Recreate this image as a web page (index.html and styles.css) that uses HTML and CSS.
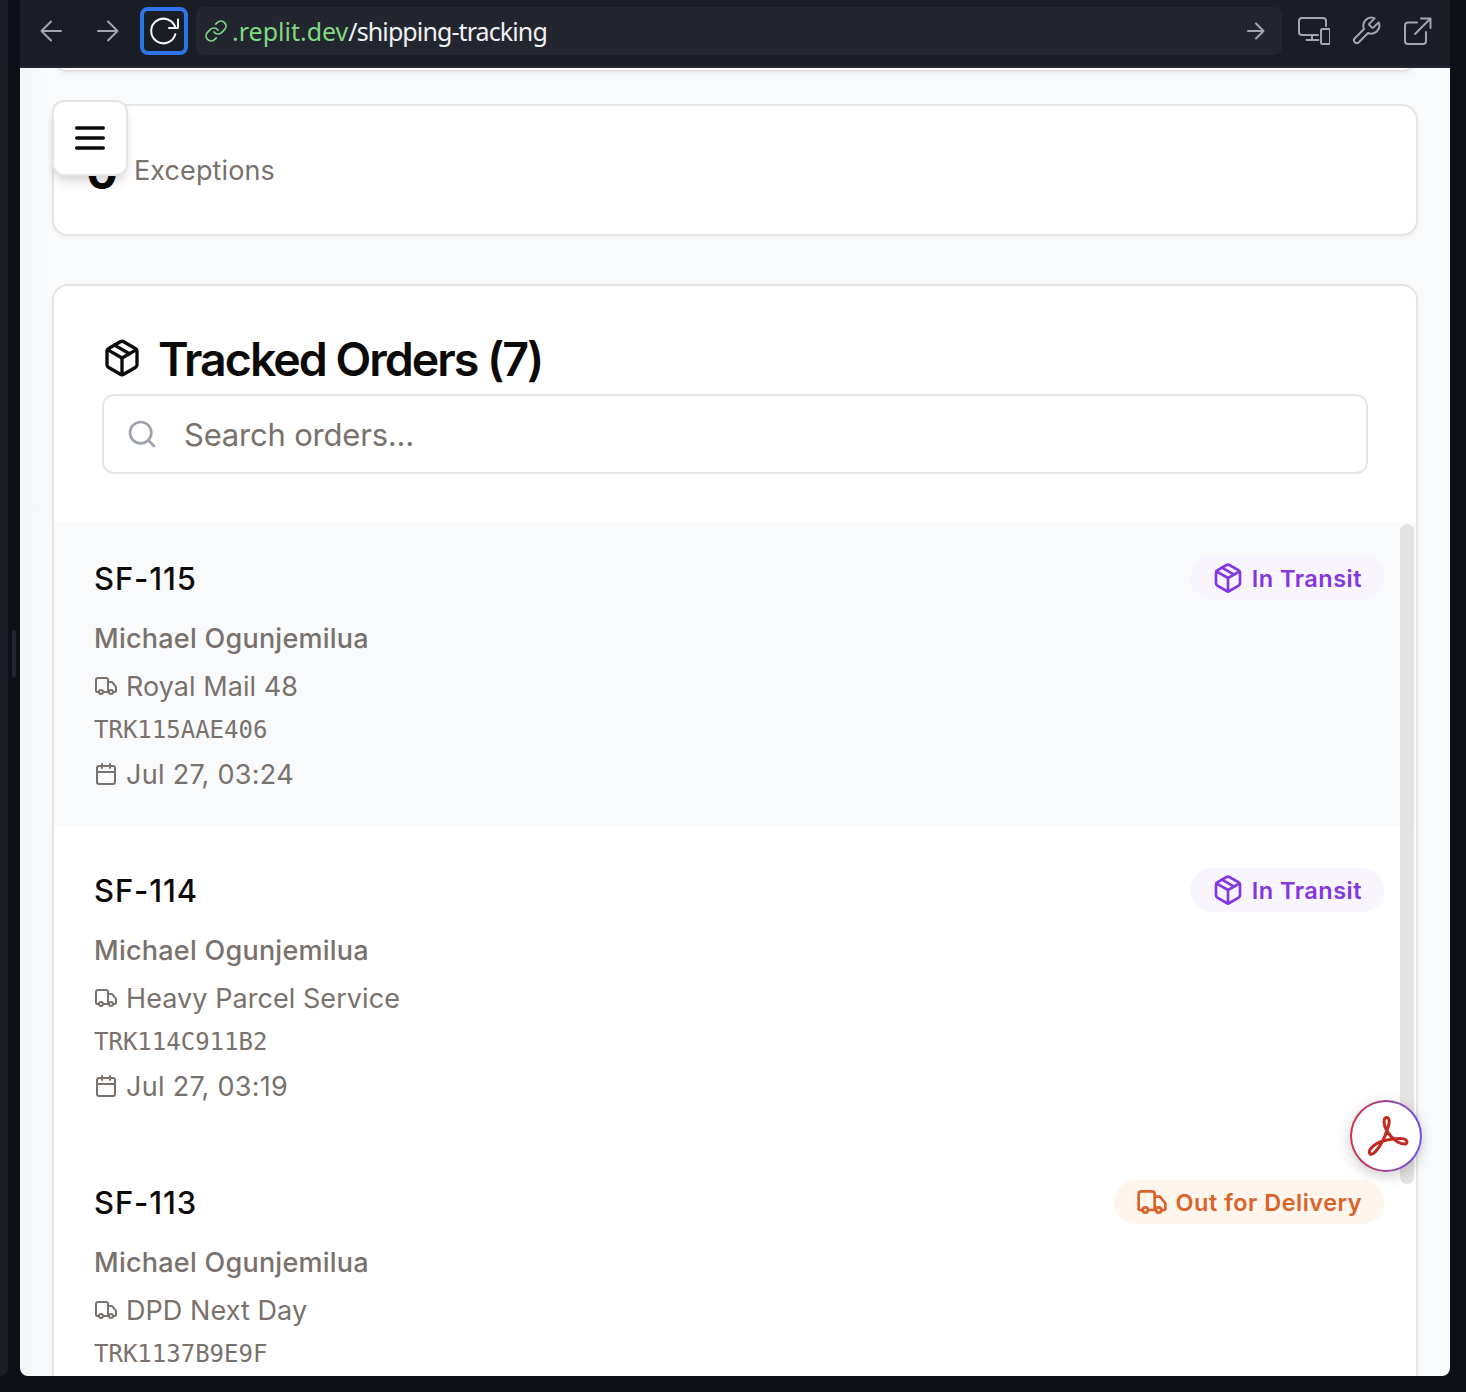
FILE: index.html
```html
<!DOCTYPE html>
<html lang="en">
<head>
<meta charset="utf-8">
<title>Shipping tracking</title>
<link rel="stylesheet" href="styles.css">
</head>
<body>
<svg class="defs" aria-hidden="true">
  <symbol id="package" viewBox="0 0 24 24"><path d="M11 21.73a2 2 0 0 0 2 0l7-4A2 2 0 0 0 21 16V8a2 2 0 0 0-1-1.73l-7-4a2 2 0 0 0-2 0l-7 4A2 2 0 0 0 3 8v8a2 2 0 0 0 1 1.73z"/><path d="M12 22V12"/><path d="m3.3 7 8.7 5 8.7-5"/><path d="m7.5 4.27 9 5.15"/></symbol>
  <symbol id="truck" viewBox="0 0 24 24"><path d="M14 18V6a2 2 0 0 0-2-2H4a2 2 0 0 0-2 2v11a1 1 0 0 0 1 1h2"/><path d="M15 18H9"/><path d="M19 18h2a1 1 0 0 0 1-1v-3.65a1 1 0 0 0-.22-.624l-3.48-4.35A1 1 0 0 0 17.520 8H14"/><circle cx="17" cy="18" r="2"/><circle cx="7" cy="18" r="2"/></symbol>
  <symbol id="calendar" viewBox="0 0 24 24"><path d="M8 2v4M16 2v4M3 10h18"/><rect x="3" y="4" width="18" height="18" rx="2"/></symbol>
</svg>
<div class="workspace">
  <aside class="side"></aside>
  <div class="divider"><span class="grip"></span></div>
  <div class="preview">
    <header class="toolbar">
      <svg class="nav back" viewBox="0 0 22 22"><path d="M21 11H1.500M11 1.500 1.500 11l9.500 9.500"/></svg>
      <svg class="nav forward" viewBox="0 0 22 22"><path d="M1 11h19.500M11 1.500l9.500 9.500-9.500 9.500"/></svg>
      <button class="reload"><svg viewBox="0 0 30 30"><path d="M29 3.500V12h-9M26.400 11.900A12.300 12.300 0 1 0 26.400 18.100"/></svg></button>
      <div class="address">
        <svg class="link" viewBox="0 0 24 24"><path d="M10 13a5 5 0 0 0 7.540.54l3-3a5 5 0 0 0-7.070-7.070l-1.720 1.710"/><path d="M14 11a5 5 0 0 0-7.540-.54l-3 3a5 5 0 0 0 7.070 7.070l1.710-1.710"/></svg>
        <span class="url"><span class="host">.replit.dev</span>/shipping-tracking</span>
        <svg class="go" viewBox="0 0 18 18"><path d="M1 9h15.500M9 1.500 16.500 9 9 16.500"/></svg>
      </div>
      <svg class="tool devices" viewBox="0 0 32 28"><path d="M28 9V4a3 3 0 0 0-3-3H4a3 3 0 0 0-3 3v11a3 3 0 0 0 3 3h16M14 18v5M8.500 23h12"/><rect x="23" y="12" width="9" height="15" rx="1.500"/></svg>
      <svg class="tool wrench" viewBox="0 0 24 24"><path d="M14.700 6.300a1 1 0 0 0 0 1.400l1.600 1.600a1 1 0 0 0 1.400 0l3.770-3.770a6 6 0 0 1-7.940 7.940l-6.910 6.910a2.120 2.120 0 0 1-3-3l6.910-6.910a6 6 0 0 1 7.940-7.940l-3.760 3.760z"/></svg>
      <svg class="tool external" viewBox="0 0 28 28"><path d="M13 5.500H4a3 3 0 0 0-3 3V24a3 3 0 0 0 3 3h15a3 3 0 0 0 3-3V15M17 1.500h9.500V11M26.500 1.500 11 17"/></svg>
    </header>
    <main class="page">
      <section class="card previous"></section>
      <section class="card stat"><b>0</b><span>Exceptions</span></section>
      <section class="card orders">
        <div class="orders-head">
          <h1><svg class="icon"><use href="#package"/></svg><span>Tracked Orders (7)</span></h1>
          <label class="search"><svg class="icon" viewBox="0 0 24 24"><circle cx="11" cy="11" r="8"/><path d="m21 21-4.300-4.300"/></svg><span>Search orders...</span></label>
        </div>
        <div class="list">
          <article class="order active">
            <div class="top"><h2>SF-115</h2><span class="badge transit"><svg class="icon"><use href="#package"/></svg>In Transit</span></div>
            <p class="name">Michael Ogunjemilua</p>
            <p class="line"><svg class="icon"><use href="#truck"/></svg><span>Royal Mail 48</span></p>
            <p class="track">TRK115AAE406</p>
            <p class="line date"><svg class="icon"><use href="#calendar"/></svg><span>Jul 27, 03:24</span></p>
          </article>
          <article class="order">
            <div class="top"><h2>SF-114</h2><span class="badge transit"><svg class="icon"><use href="#package"/></svg>In Transit</span></div>
            <p class="name">Michael Ogunjemilua</p>
            <p class="line"><svg class="icon"><use href="#truck"/></svg><span>Heavy Parcel Service</span></p>
            <p class="track">TRK114C911B2</p>
            <p class="line date"><svg class="icon"><use href="#calendar"/></svg><span>Jul 27, 03:19</span></p>
          </article>
          <article class="order">
            <div class="top"><h2>SF-113</h2><span class="badge delivery"><svg class="icon"><use href="#truck"/></svg>Out for Delivery</span></div>
            <p class="name">Michael Ogunjemilua</p>
            <p class="line"><svg class="icon"><use href="#truck"/></svg><span>DPD Next Day</span></p>
            <p class="track">TRK1137B9E9F</p>
          </article>
          <span class="thumb"></span>
        </div>
      </section>
      <button class="menu"><svg class="icon" viewBox="0 0 24 24"><path d="M4 6h16M4 12h16M4 18h16"/></svg></button>
      <div class="acrobat"><svg viewBox="0 0 40 40"><path d="M20.500 1.500C17 1.500 17.500 9 20.500 14c2.500 5 6 8.500 10.500 11.500 5 3 10 3.500 10 .5 0-4-8-4-14-3-6 .8-13 2.500-17 5-5 3-8 7-6 10 3 2 8-5 11-10 3-5 6-13 8-20 .5-4 0-6.500-2.500-6.500Z"/></svg></div>
    </main>
  </div>
</div>
</body>
</html>
```
FILE: styles.css
```css
* { box-sizing: border-box; }
body { margin: 0; background: #0e0f17; font-family: Inter, "Liberation Sans", sans-serif; color: #0c0a09; }
h1, h2, p { margin: 0; }
button { padding: 0; font: inherit; }
svg { display: block; flex: none; fill: none; stroke: currentColor; stroke-linecap: round; stroke-linejoin: round; }
.defs { position: absolute; width: 0; height: 0; }
.icon { stroke-width: 2; }

.workspace { display: flex; width: 1466px; height: 1392px; padding-bottom: 16px; overflow: hidden; }
.side { width: 8px; background: #1a1d26; border-bottom-right-radius: 8px; }
.divider { width: 12px; display: flex; align-items: center; padding: 0 0 68px 4px; }
.grip { width: 4px; height: 48px; background: #23262f; border-radius: 2px; }
.preview { width: 1430px; display: flex; flex-direction: column; overflow: hidden; border-radius: 0 0 8px 8px; }

.toolbar { height: 68px; flex: none; display: flex; align-items: flex-start; padding: 7px 18px 0 20px; background: #1a1d25; border-bottom: 2px solid #24252f; color: #a3a6b0; }
.toolbar svg { stroke-width: 2; }
.nav { width: 22px; height: 22px; margin-top: 13px; }
.forward { margin-left: 35px; }
.reload { width: 48px; height: 48px; margin-left: 21px; display: grid; place-items: center; background: #1a1d25; border: 4px solid #2f74e8; border-radius: 8px; color: #f4f5f7; }
.reload svg { width: 30px; height: 30px; }
.address { width: 1086px; height: 48px; margin-left: 8px; display: flex; align-items: center; padding: 0 17px 0 8px; background: #23262f; border-radius: 8px; }
.link { width: 24px; height: 24px; color: #7fd884; }
.toolbar .link { stroke-width: 1.700; }
.url { margin-left: 4px; color: #f0f1f4; font-size: 25px; letter-spacing: -0.900px; white-space: nowrap; font-family: "Noto Sans", sans-serif; }
.host { color: #7fd884; letter-spacing: 0; }
.go { width: 18px; height: 18px; margin-left: auto; }
.devices { width: 32px; height: 28px; margin: 10px 0 0 16px; }
.wrench { width: 32px; height: 32px; margin: 8px 0 0 20px; }
.toolbar .wrench { stroke-width: 1.500; }
.external { width: 28px; height: 28px; margin: 10px 0 0 22px; }

.page { position: relative; flex: 1; min-height: 0; overflow: hidden; padding: 0 32px; background: linear-gradient(90deg, #f4f5f6, #f9fafc 30px); }
.card { background: #fff; border: 2px solid #e7e5e4; border-radius: 16px; box-shadow: 0 2px 4px rgba(0, 0, 0, .05); }
.previous { height: 36px; margin-top: -32px; }
.stat { height: 132px; margin-top: 32px; display: flex; align-items: center; gap: 16px; padding: 0 32px; }
.stat b { width: 32px; text-align: center; font-size: 47px; padding-top: 2px; }
.stat span { padding-top: 1px; font-size: 27px; color: #78716c; letter-spacing: .1px; }
.orders { height: 1200px; margin-top: 48px; overflow: hidden; }
.orders-head { display: flex; flex-direction: column; gap: 12px; padding: 48px; }
h1 { height: 48px; display: flex; align-items: center; gap: 16px; font-size: 46.500px; line-height: 48px; font-weight: 600; letter-spacing: -2px; white-space: nowrap; }
h1 span { padding-top: 1px; }
h1 .icon { width: 40px; height: 40px; }
.search { height: 80px; display: flex; align-items: center; padding-left: 22px; border: 2px solid #e5e5e5; border-radius: 12px; font-size: 31px; color: #78716c; letter-spacing: -.200px; }
.search span { padding-top: 1px; }
.search .icon { width: 32px; height: 32px; margin-right: 26px; color: #9ca3af; }
.list { position: relative; }
.order { height: 304px; margin-bottom: 8px; padding: 32px 32px 32px 40px; }
.active { background: #f9fafc; }
.top { height: 48px; margin-bottom: 16px; display: flex; align-items: center; justify-content: space-between; }
h2 { padding-top: 1px; font-size: 31px; font-weight: 500; line-height: 48px; letter-spacing: .900px; }
.badge { height: 44px; display: flex; align-items: center; gap: 8px; padding: 0 22px; border-radius: 22px; font-size: 23.500px; font-weight: 600; letter-spacing: .480px; }
.badge .icon { width: 32px; height: 32px; }
.transit { background: #f8f5fe; color: #8436df; }
.delivery { background: #fef6ed; color: #db622b; }
.name { height: 40px; margin-bottom: 8px; font-size: 27px; font-weight: 500; line-height: 41px; color: #78716c; letter-spacing: .250px; }
.line { height: 40px; display: flex; align-items: center; gap: 8px; font-size: 27px; line-height: 40px; color: #78716c; letter-spacing: .060px; }
.line span { padding-top: 1px; }
.date { letter-spacing: .280px; }
.line .icon { width: 24px; height: 24px; }
.track { height: 32px; margin: 8px 0; font-family: "DejaVu Sans Mono", monospace; font-size: 24px; line-height: 32px; color: #78716c; }
.thumb { position: absolute; top: 2px; right: 2px; width: 14px; height: 660px; border-radius: 7px; background: #e4e3e1; }
.menu { position: absolute; left: 32px; top: 32px; width: 76px; height: 76px; display: grid; place-items: center; background: #fff; border: 2px solid #e7e5e4; border-radius: 12px; box-shadow: 0 8px 12px -2px rgba(0, 0, 0, .12), 0 4px 8px -4px rgba(0, 0, 0, .1); color: #0c0a09; }
.menu .icon { width: 40px; height: 40px; }
.acrobat { position: absolute; left: 1330px; top: 1032px; width: 72px; height: 72px; display: grid; place-items: center; border: 2px solid transparent; border-radius: 50%; background: linear-gradient(#fff, #fff) padding-box, linear-gradient(90deg, #d23340, #6b50ee) border-box; box-shadow: 0 4px 14px rgba(0, 0, 0, .2); }
.acrobat svg { width: 40px; height: 40px; overflow: visible; color: #c22a20; stroke-width: 3; }
```
